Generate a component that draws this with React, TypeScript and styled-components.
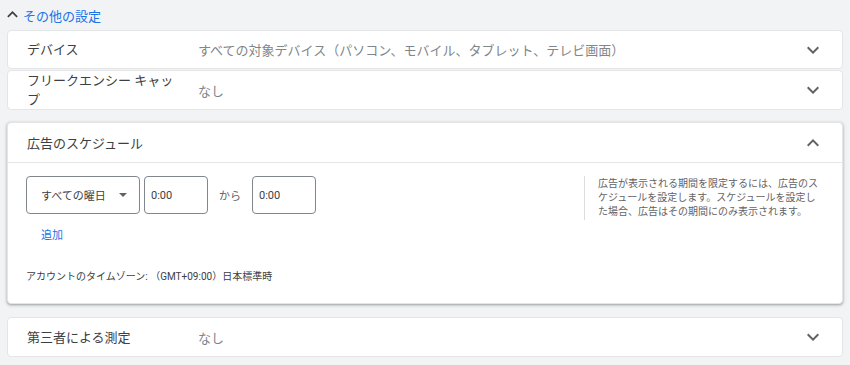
import styled, { createGlobalStyle } from "styled-components";

const GlobalStyle = createGlobalStyle`
  html, body {
    margin: 0;
    padding: 0;
    background: #f1f3f4;
  }
  body {
    font-family: Roboto, "Noto Sans CJK JP", sans-serif;
    color: #3c4043;
  }
`;

const Page = styled.div`
  padding: 0 7px;
  width: 836px;
`;

const MoreLink = styled.div`
  display: flex;
  align-items: center;
  height: 30px;
  color: #1a73e8;
  font-size: 13px;
  svg {
    margin-left: -5px;
    margin-top: -1px;
  }
`;

const Group = styled.div`
  display: flex;
  flex-direction: column;
  gap: 1px;
`;

const Card = styled.div<{ $raised?: boolean; $gap?: number }>`
  background: #fff;
  border: 1px solid #e3e5e7;
  border-radius: 4px;
  margin-top: ${(p) => p.$gap ?? 0}px;
  box-shadow: ${(p) =>
    p.$raised ? "0 1px 2px rgba(60,64,67,0.3), 0 1px 3px 1px rgba(60,64,67,0.15)" : "none"};
`;

const Row = styled.div<{ $h: number }>`
  display: grid;
  grid-template-columns: 171px 1fr 24px;
  align-items: center;
  height: ${(p) => p.$h}px;
  padding: 0 17px 0 19px;
  box-sizing: border-box;
`;

const Label = styled.div`
  font-size: 13px;
  line-height: 19px;
  color: #3c4043;
  padding-right: 16px;
`;

const Value = styled.div`
  font-size: 13px;
  color: #80868b;
`;

const Header = styled.div`
  display: flex;
  align-items: center;
  justify-content: space-between;
  height: 39px;
  padding: 0 17px 0 19px;
  border-bottom: 1px solid #e3e5e7;
  font-size: 13px;
`;

const Body = styled.div`
  display: flex;
  padding: 13px 20px 18px 18px;
`;

const Main = styled.div`
  flex: 1;
  display: flex;
  flex-direction: column;
`;

const Controls = styled.div`
  display: flex;
  align-items: center;
  gap: 4px;
`;

const Select = styled.div`
  display: flex;
  align-items: center;
  justify-content: space-between;
  width: 114px;
  height: 38px;
  box-sizing: border-box;
  padding: 0 12px 0 14px;
  border: 1px solid #80868b;
  border-radius: 4px;
  font-size: 11px;
  color: #3c4043;
`;

const Caret = styled.span`
  width: 0;
  height: 0;
  border-left: 4px solid transparent;
  border-right: 4px solid transparent;
  border-top: 4px solid #5f6368;
`;

const TimeBox = styled.div`
  display: flex;
  align-items: center;
  width: 64px;
  height: 38px;
  box-sizing: border-box;
  padding-left: 6px;
  border: 1px solid #80868b;
  border-radius: 4px;
  font-size: 11px;
  color: #3c4043;
`;

const Between = styled.span`
  font-size: 11px;
  color: #5f6368;
  margin: 0 7px;
`;

const AddLink = styled.div`
  margin: 12px 0 0 15px;
  font-size: 11px;
  line-height: 20px;
  color: #1a73e8;
`;

const TimeZone = styled.div`
  margin-top: 23px;
  font-size: 10px;
  line-height: 16px;
  color: #3c4043;
`;

const Help = styled.div`
  width: 224px;
  align-self: flex-start;
  border-left: 1px solid #dadce0;
  padding: 1px 0 1px 13px;
  font-size: 10px;
  line-height: 14px;
  color: #5f6368;
`;

const Chevron = ({ up = false }: { up?: boolean }) => (
  <svg width="24" height="24" viewBox="0 0 24 24" style={{ transform: up ? "rotate(180deg)" : undefined }}>
    <path d="M7.41 8.59 12 13.17l4.59-4.58L18 10l-6 6-6-6 1.41-1.41z" fill="#5f6368" />
  </svg>
);

export default function App() {
  return (
    <>
      <GlobalStyle />
      <Page>
        <MoreLink>
          <svg width="21" height="21" viewBox="0 0 24 24">
            <path d="M7.41 15.41 12 10.83l4.59 4.58L18 14l-6-6-6 6z" fill="#3c4043" />
          </svg>
          その他の設定
        </MoreLink>

        <Group>
          <Card>
            <Row $h={37}>
              <Label>デバイス</Label>
              <Value>すべての対象デバイス（パソコン、モバイル、タブレット、テレビ画面）</Value>
              <Chevron />
            </Row>
          </Card>
          <Card>
            <Row $h={38}>
              <Label>フリークエンシー キャップ</Label>
              <Value>なし</Value>
              <Chevron />
            </Row>
          </Card>
        </Group>

        <Card $raised $gap={12}>
          <Header>
            広告のスケジュール
            <Chevron up />
          </Header>
          <Body>
            <Main>
              <Controls>
                <Select>
                  すべての曜日
                  <Caret />
                </Select>
                <TimeBox>0:00</TimeBox>
                <Between>から</Between>
                <TimeBox>0:00</TimeBox>
              </Controls>
              <AddLink>追加</AddLink>
              <TimeZone>アカウントのタイムゾーン: （GMT+09:00）日本標準時</TimeZone>
            </Main>
            <Help>
              広告が表示される期間を限定するには、広告のスケジュールを設定します。スケジュールを設定した場合、広告はその期間にのみ表示されます。
            </Help>
          </Body>
        </Card>

        <Card $gap={13}>
          <Row $h={38}>
            <Label>第三者による測定</Label>
            <Value>なし</Value>
            <Chevron />
          </Row>
        </Card>
      </Page>
    </>
  );
}
